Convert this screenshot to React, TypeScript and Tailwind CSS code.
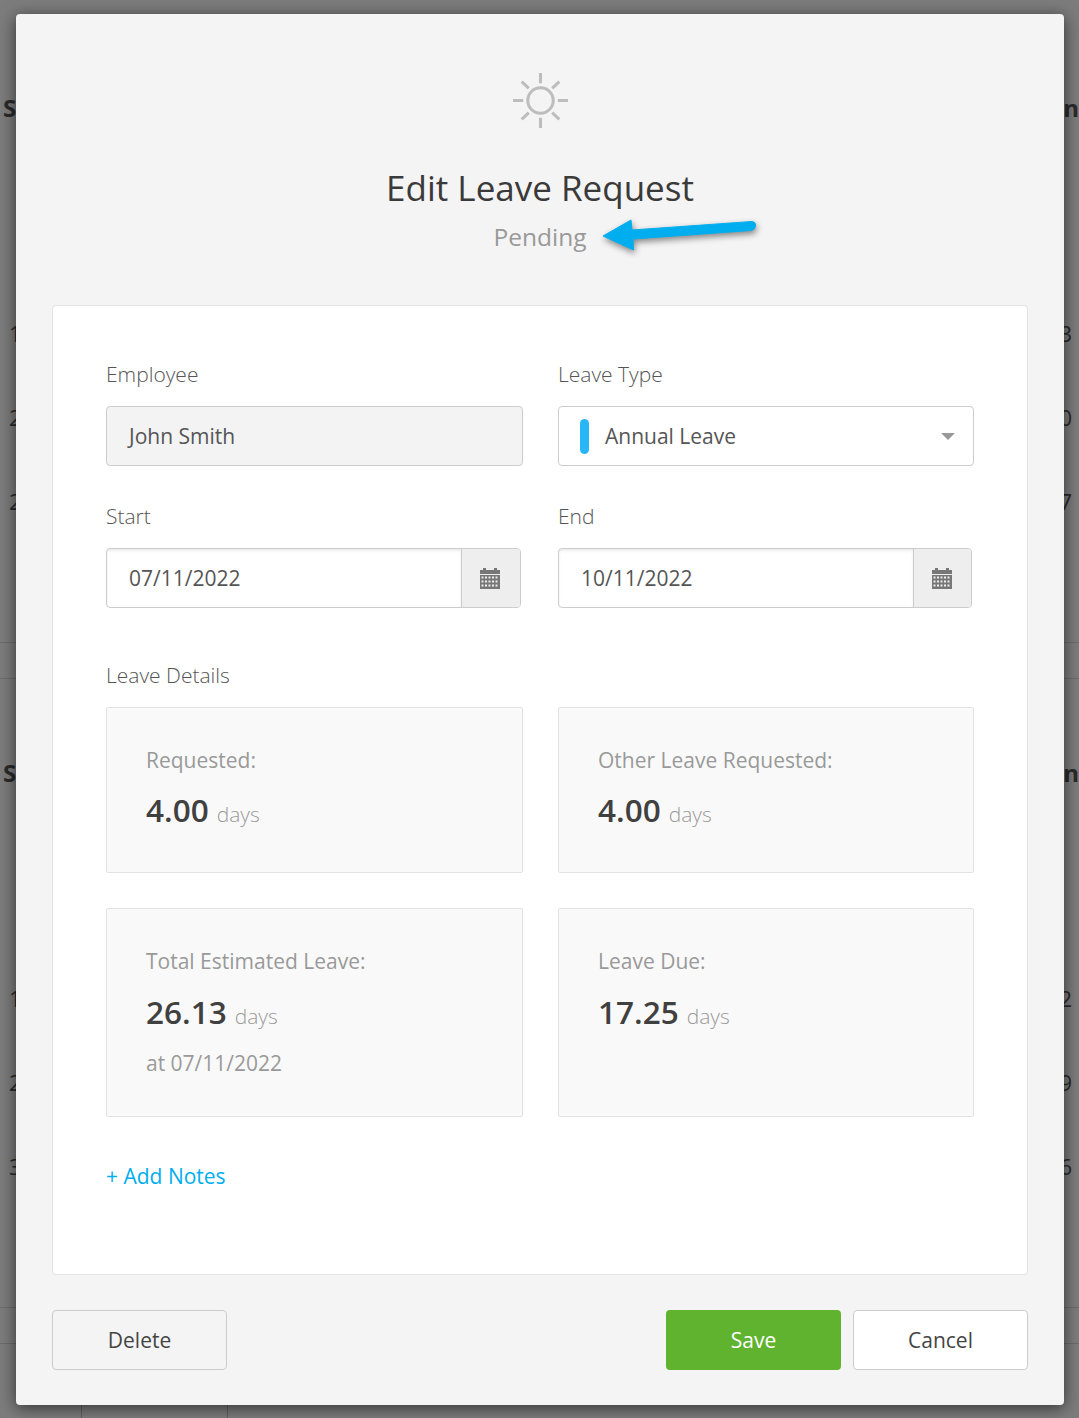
import React from 'react';

function Label({ children }: { children: React.ReactNode }) {
  return <div className="h-[29px] text-[21px] leading-[28px] font-light text-[#555]">{children}</div>;
}

function Field({ label, children }: { label: string; children: React.ReactNode }) {
  return (
    <div className="w-[417px]">
      <Label>{label}</Label>
      <div className="mt-[17px]">{children}</div>
    </div>
  );
}

function CalendarIcon() {
  return (
    <svg width="20" height="21" viewBox="0 0 20 21" fill="#777">
      <rect x="3" y="0" width="3" height="4" />
      <rect x="14" y="0" width="3" height="4" />
      <rect x="0" y="2" width="20" height="4" />
      <path fillRule="evenodd" d="M0 7h20v14H0zM1.5 8.5v2h2v-2zm3.5 0v2h2v-2zm3.5 0v2h2v-2zm3.5 0v2h2v-2zm3.5 0v2h2v-2zM1.5 12.5v2h2v-2zm3.5 0v2h2v-2zm3.5 0v2h2v-2zm3.5 0v2h2v-2zm3.5 0v2h2v-2zM1.5 16.5v2h2v-2zm3.5 0v2h2v-2zm3.5 0v2h2v-2zm3.5 0v2h2v-2zm3.5 0v2h2v-2z" />
    </svg>
  );
}

function DateInput({ value, width, addon }: { value: string; width: string; addon: string }) {
  return (
    <div className={`flex h-[60px] overflow-hidden rounded-[4px] border border-[#ccc] bg-white ${width}`}>
      <div className="flex flex-1 items-center pl-[22px] pt-[2px] text-[21px] text-[#555] shadow-[inset_0_2px_3px_rgba(0,0,0,0.08)]">{value}</div>
      <div className={`flex items-center justify-center border-l border-[#ccc] bg-[#eee] pr-[2px] pt-[1px] ${addon}`}>
        <CalendarIcon />
      </div>
    </div>
  );
}

function Stat({ label, value, note, className, valueGap }: { label: string; value: string; note?: string; className: string; valueGap: string }) {
  return (
    <div className={`rounded-[2px] border border-[#e3e3e3] bg-[#f9f9f9] pl-[39px] pt-[38px] ${className}`}>
      <div className="text-[21px] leading-[28px] text-[#999]">{label}</div>
      <div className={`flex items-baseline gap-[8px] leading-[42px] ${valueGap}`}>
        <span className="text-[31.5px] font-semibold text-[#404040]">{value}</span>
        <span className="text-[21px] font-light text-[#999]">days</span>
      </div>
      {note && <div className="mt-[12px] text-[21px] leading-[28px] text-[#999]">{note}</div>}
    </div>
  );
}

// greyed-out page behind the dialog, only the table edges show
function BackRow({ left, right, bold, className }: { left: string; right: string; bold?: boolean; className: string }) {
  return (
    <div className={`flex h-[30px] items-center justify-between leading-[30px] text-[#2a2a2a] ${bold ? 'pl-[3px] pr-0 text-[24px] font-bold' : 'pl-[9px] pr-[7px] text-[22px]'} ${className}`}>
      <span>{left}</span>
      <span>{right}</span>
    </div>
  );
}

export default function App() {
  return (
    <div className="relative h-[1418px] w-[1079px] overflow-hidden bg-[#7c7c7c]" style={{ fontFamily: '"Open Sans", sans-serif' }}>
      <div>
        <BackRow left="S" right="n" bold className="mt-[93px]" />
        <BackRow left="1" right="3" className="mt-[195px]" />
        <BackRow left="2" right="0" className="mt-[54px]" />
        <BackRow left="2" right="7" className="mt-[54px]" />
        <div className="mt-[126px] h-[37px] border-y border-[#6b6b6b]" />
        <BackRow left="S" right="n" bold className="mt-[79px]" />
        <BackRow left="1" right="2" className="mt-[195px]" />
        <BackRow left="2" right="9" className="mt-[54px]" />
        <BackRow left="3" right="6" className="mt-[54px]" />
        <div className="mt-[126px] h-[37px] border-y border-[#6b6b6b]" />
        <div className="ml-[81px] h-[80px] w-[147px] border-x border-[#5f5f5f]" />
      </div>

      <div className="absolute left-[16px] top-[14px] flex h-[1391px] w-[1048px] flex-col rounded-[4px] bg-[#f4f4f4] px-[36px] shadow-[0_3px_16px_rgba(0,0,0,0.6)]">
        <div className="flex h-[291px] flex-col items-center">
          <svg className="mt-[58px]" width="57" height="57" viewBox="0 0 56 56" fill="none" stroke="#bdbdbd" strokeWidth="3">
            <circle cx="28" cy="28" r="12.5" />
            <path d="M28 1v10M28 45v10M1 28h10M45 28h10M9.5 9.5l7 6.5M46.5 9.5l-7 6.5M9.5 46.5l7-6.5M46.5 46.5l-7-6.5" />
          </svg>
          <div className="mt-[37px] text-[35px] leading-[44px] text-[#3a3a3a]">Edit Leave Request</div>
          <div className="mt-[10px] text-[24.5px] leading-[34px] text-[#999]">Pending</div>
        </div>

        <div className="h-[970px] rounded-[4px] border border-[#e3e3e3] bg-white pl-[53px] pt-[54px]">
          <div className="flex gap-[35px]">
            <Field label="Employee">
              <div className="flex h-[60px] items-center rounded-[4px] border border-[#ccc] bg-[#f3f3f3] pl-[22px] pt-[2px] text-[21px] text-[#555]">John Smith</div>
            </Field>
            <div className="w-[416px]">
              <Field label="Leave Type">
                <div className="flex h-[60px] w-[416px] items-center rounded-[4px] border border-[#ccc] bg-white pl-[21px] pr-[18px] text-[21px] text-[#555]">
                  <span className="h-[35px] w-[9px] rounded-full bg-[#29b6f6]" />
                  <span className="ml-[16px] flex-1 pt-[2px]">Annual Leave</span>
                  <span className="h-0 w-0 border-x-[7px] border-t-[7px] border-x-transparent border-t-[#999]" />
                </div>
              </Field>
            </div>
          </div>

          <div className="mt-[36px] flex gap-[35px]">
            <Field label="Start"><DateInput value="07/11/2022" width="w-[415px]" addon="w-[59px]" /></Field>
            <div className="w-[416px]">
              <Field label="End"><DateInput value="10/11/2022" width="w-[414px]" addon="w-[58px]" /></Field>
            </div>
          </div>

          <div className="mt-[53px]"><Label>Leave Details</Label></div>
          <div className="mt-[17px] flex gap-[35px]">
            <Stat label="Requested:" value="4.00" valueGap="mt-[15px]" className="h-[166px] w-[417px]" />
            <Stat label="Other Leave Requested:" value="4.00" valueGap="mt-[15px]" className="h-[166px] w-[416px]" />
          </div>
          <div className="mt-[35px] flex gap-[35px]">
            <Stat label="Total Estimated Leave:" value="26.13" note="at 07/11/2022" valueGap="mt-[16px]" className="h-[209px] w-[417px]" />
            <Stat label="Leave Due:" value="17.25" valueGap="mt-[16px]" className="h-[209px] w-[416px]" />
          </div>

          <div className="mt-[45px] text-[21px] leading-[28px] text-[#00aeef]">+ Add Notes</div>
        </div>

        <div className="mt-[35px] flex items-center text-[21px]">
          <button className="h-[60px] w-[175px] rounded-[4px] border border-[#ccc] pt-[2px] text-[#444]">Delete</button>
          <button className="ml-auto h-[60px] w-[175px] rounded-[4px] bg-[#5fb32e] pt-[2px] text-white">Save</button>
          <button className="ml-[12px] h-[60px] w-[175px] rounded-[4px] border border-[#ccc] bg-white pt-[2px] text-[#444]">Cancel</button>
        </div>
      </div>

      {/* annotation arrow on top of the screenshot */}
      <svg className="absolute left-[596px] top-[212px] drop-shadow-[1px_3px_3px_rgba(0,0,0,0.45)]" width="170" height="48" viewBox="0 0 170 48">
        <path d="M7 24 L35 8 L36 18 L156 9.5 Q160 10 159.5 14 Q159 18 155 18.5 L37 27 L37.5 38 Z" fill="#00aeef" stroke="#00aeef" strokeLinejoin="round" />
      </svg>
    </div>
  );
}
